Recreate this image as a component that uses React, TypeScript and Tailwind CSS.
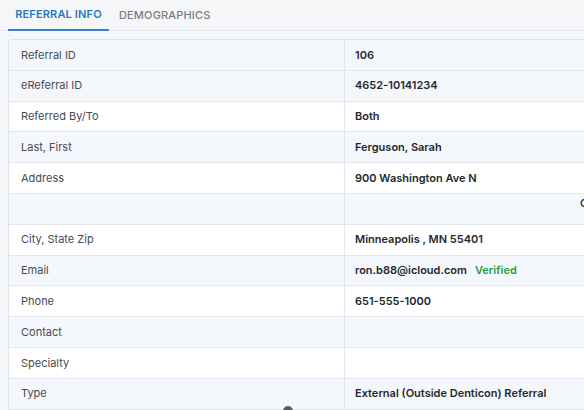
import React from "react";

const rows: { label: string; value?: React.ReactNode; blue: boolean }[] = [
  { label: "Referral ID", value: "106", blue: true },
  { label: "eReferral ID", value: "4652-10141234", blue: true },
  { label: "Referred By/To", value: "Both", blue: false },
  { label: "Last, First", value: "Ferguson, Sarah", blue: true },
  { label: "Address", value: "900 Washington Ave N", blue: false },
  { label: "", value: "__blank", blue: true },
  { label: "City, State Zip", value: "Minneapolis , MN 55401", blue: false },
  {
    label: "Email",
    value: (
      <span>
        ron.b88@icloud.com
        <span className="ml-[8px] text-[#2f9a3c] font-semibold">Verified</span>
      </span>
    ),
    blue: true,
  },
  { label: "Phone", value: "651-555-1000", blue: false },
  { label: "Contact", value: "", blue: true },
  { label: "Specialty", value: "", blue: false },
  { label: "Type", value: "External (Outside Denticon) Referral", blue: true },
];

export default function App() {
  return (
    <div
      className="relative w-[584px] h-[410px] overflow-hidden bg-[#f5f6f8] text-[11px]"
      style={{ fontFamily: "Inter, 'Noto Sans', sans-serif" }}
    >
      <div className="flex h-[31px] border-b border-[#e4e7ed] pl-[8px]">
        <div className="flex items-center justify-center w-[101px] h-[31px] border-b-2 border-[#3b82c6] text-[#2a78c2] font-semibold tracking-[0.15px] -mb-px">
          REFERRAL INFO
        </div>
        <div className="flex items-center pl-[10px] h-[30px] text-[#7a7d83] font-medium tracking-[0.15px]">
          DEMOGRAPHICS
        </div>
      </div>
      <div className="ml-[8px] mt-[8px] w-[600px] border-l border-t border-[#dde3ec] rounded-tl-[4px] overflow-hidden bg-white">
        {rows.map((r, i) => (
          <div
            key={i}
            className={`flex h-[30.8px] border-b border-[#e3e8f0] ${r.blue ? "bg-[#f4f8fd]" : "bg-white"}`}
          >
            <div className="w-[336px] shrink-0 flex items-center pl-[12px] border-r border-[#e3e8f0] text-[#474a50]">
              {r.label}
            </div>
            <div className="flex-1 flex items-center pl-[10px] text-[#26282c] font-semibold whitespace-nowrap">
              {r.value === "__blank" ? (
                <span className="relative -top-[6px] pl-[225px] text-[#333]">Copy</span>
              ) : (
                r.value
              )}
            </div>
          </div>
        ))}
      </div>
      <div className="absolute left-[283px] top-[406px] w-[10px] h-[10px] rounded-full bg-[#5a5d62]" />
    </div>
  );
}
